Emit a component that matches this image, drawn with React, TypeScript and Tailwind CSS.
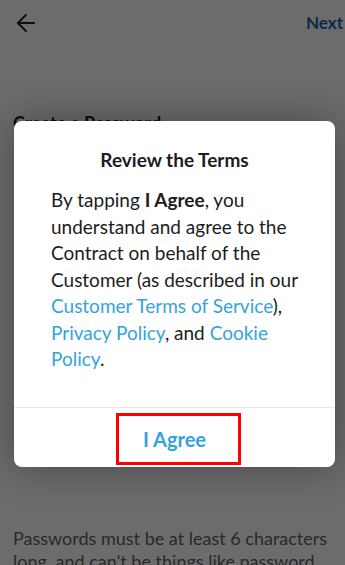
import { ArrowLeft } from "lucide-react"

const font = { fontFamily: "Lato, 'Noto Sans', sans-serif" }

export default function App() {
  return (
    <div className="relative w-[345px] h-[565px] overflow-hidden bg-white" style={font}>
      {/* --- Page behind the dialog --- */}
      <div className="flex flex-col h-full">
        <header className="flex items-center justify-between h-[46px] pl-[12px] pr-[2px]">
          <ArrowLeft className="w-[28px] h-[28px] text-[#1d1c1d]" strokeWidth={1.7} />
          <span className="text-[17px] font-bold text-[#1264a3]">Next</span>
        </header>
        <div className="px-[13px] pt-[64px]">
          <h2 className="text-[18px] font-bold text-[#1d1c1d]">Create a Password</h2>
          <div className="mt-[14px] h-[44px] border-b border-[#ddd]" />
        </div>
        <p className="mt-auto px-[13px] text-[18px] leading-[23px] text-[#616061] translate-y-[31px]">
          Passwords must be at least 6 characters long, and can't be things like password, 123456 or abcdef.
        </p>
      </div>

      {/* --- Dim overlay --- */}
      <div className="absolute inset-0 bg-[#010203]/[0.58]" />

      {/* --- Dialog --- */}
      <div className="absolute left-[14px] top-[121px] w-[321px] bg-white rounded-[8px] shadow-[0_0_40px_rgba(0,0,0,0.35)]">
        <div className="pl-[37px] pr-[20px] pt-[26px] pb-[34px]">
          <h3 className="text-center -ml-[17px] text-[19px] font-bold text-[#1d1c1d] leading-[26px]">Review the Terms</h3>
          <p className="mt-[14px] text-[19px] leading-[26.5px] text-[#1d1c1d]">
            By tapping <span className="font-bold">I Agree</span>, you understand and agree to the Contract on behalf of the Customer (as described in our{" "}
            <span className="text-[#36a2e0]">Customer Terms of Service</span>),{" "}
            <span className="text-[#36a2e0]">Privacy Policy</span>, and{" "}
            <span className="text-[#36a2e0]">Cookie Policy</span>.
          </p>
        </div>
        <div className="border-t border-[#e8e8e8] flex justify-center pt-[5px] pb-[2px]">
          <button className="w-[125px] h-[52px] translate-x-[4px] border-[3px] border-[#ff0000] text-[20px] font-bold text-[#36a2e0]">
            <span className="inline-block -translate-x-[4px]">I Agree</span>
          </button>
        </div>
      </div>
    </div>
  )
}
